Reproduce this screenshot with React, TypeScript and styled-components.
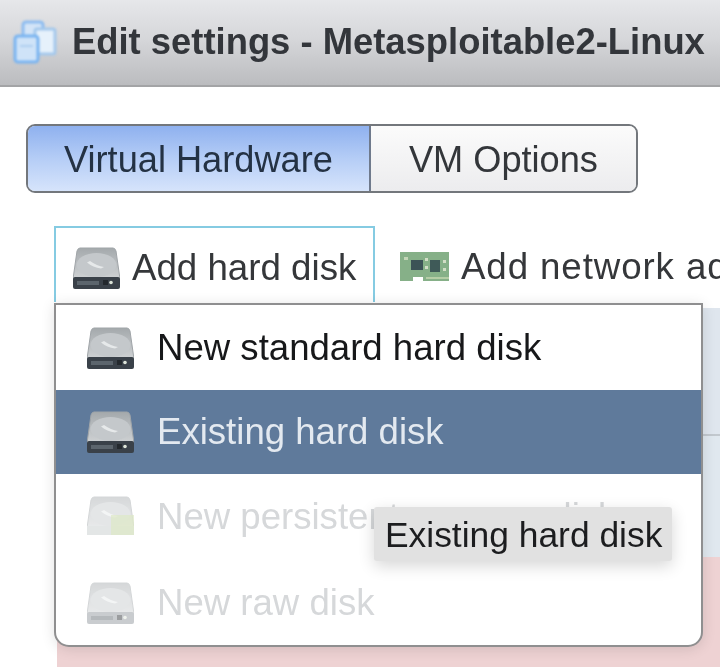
import { createGlobalStyle, styled } from "styled-components";

const GlobalStyle = createGlobalStyle`
  html, body {
    margin: 0;
    padding: 0;
    background: #fff;
  }
  body {
    font-family: "Liberation Sans", Arial, sans-serif;
  }
`;

const Page = styled.div`
  position: relative;
  width: 720px;
  height: 668px;
  overflow: hidden;
  background: #fff;
  filter: blur(0.6px);
`;

const TitleBar = styled.header`
  display: flex;
  align-items: center;
  gap: 15px;
  box-sizing: border-box;
  height: 87px;
  padding: 0 0 2px 13px;
  border-bottom: 2px solid #a3a4a6;
  background: linear-gradient(#e6e7ea, #d6d7da 45%, #bbbcbf);
  white-space: nowrap;
`;

const Title = styled.h1`
  margin: 0;
  font-size: 36.4px;
  font-weight: 700;
  color: #33363b;
`;

const TabGroup = styled.div`
  display: flex;
  width: 612px;
  height: 69px;
  box-sizing: border-box;
  margin: 37px 0 0 26px;
  border: 2px solid #73777c;
  border-radius: 9px;
  overflow: hidden;
`;

const Tab = styled.div<{ $active?: boolean }>`
  display: flex;
  align-items: center;
  justify-content: center;
  box-sizing: border-box;
  padding-top: 2px;
  width: ${(p) => (p.$active ? "344px" : "266px")};
  font-size: 36.2px;
  color: ${(p) => (p.$active ? "#243244" : "#33363a")};
  background: ${(p) =>
    p.$active
      ? "linear-gradient(#8fb1ef, #b5cdf6 50%, #d6e4fb)"
      : "linear-gradient(#fbfbfb, #ececee)"};
  border-right: ${(p) => (p.$active ? "2px solid #6f7a8c" : "none")};
`;

const Toolbar = styled.div`
  display: flex;
  height: 76px;
  margin-top: 33px;
  padding-left: 54px;
`;

const ToolButton = styled.div<{ $focused?: boolean }>`
  display: flex;
  flex: none;
  align-items: center;
  gap: 12px;
  box-sizing: border-box;
  font-size: 36.7px;
  letter-spacing: ${(p) => (p.$focused ? "0" : "0.9px")};
  color: #35373a;
  white-space: nowrap;
  padding: ${(p) => (p.$focused ? "5px 0 0 17px" : "5px 0 0 25px")};
  width: ${(p) => (p.$focused ? "321px" : "auto")};
  border: ${(p) => (p.$focused ? "2px solid #85cbe2" : "none")};
  border-bottom: none;
`;

const Grid = styled.div`
  margin-left: 57px;
  height: 365px;
  display: grid;
  grid-template-rows: 6px 126px 123px 1fr;
`;

const GridGap = styled.div`
  background: #fff;
`;

const GridRow = styled.div<{ $tone: "blue" | "pale" | "red" }>`
  border-top: ${(p) => (p.$tone === "pale" ? "2px solid #c2c8ce" : "none")};
  background: ${(p) =>
    p.$tone === "red"
      ? "#eed2d3"
      : p.$tone === "pale"
        ? "#e0e8ef"
        : "#dfe6ee"};
`;

const Menu = styled.div`
  position: absolute;
  left: 54px;
  top: 303px;
  width: 649px;
  height: 344px;
  box-sizing: border-box;
  border: 2px solid #8f8f90;
  border-radius: 0 0 15px 15px;
  background: #fff;
  box-shadow: 0 2px 14px rgba(0, 0, 0, 0.12);
  display: grid;
  grid-template-rows: 85px 84px 84px 1fr;
  overflow: hidden;
`;

const MenuItem = styled.div<{ $state?: "selected" | "disabled" }>`
  display: flex;
  align-items: center;
  gap: 23px;
  box-sizing: border-box;
  padding: ${(p) => (p.$state === "disabled" ? "2px 0 0 31px" : "0 0 0 31px")};
  font-size: 36.6px;
  white-space: nowrap;
  color: ${(p) =>
    p.$state === "selected"
      ? "#e3e9f0"
      : p.$state === "disabled"
        ? "#d6d8da"
        : "#17181a"};
  background: ${(p) => (p.$state === "selected" ? "#5f7a9b" : "transparent")};
`;

const Tooltip = styled.div`
  position: absolute;
  left: 374px;
  top: 507px;
  width: 298px;
  height: 54px;
  box-sizing: border-box;
  padding: 3px 0 0 11px;
  display: flex;
  align-items: center;
  border-radius: 3px;
  background: #e1e1e1;
  color: #1c1d1f;
  font-size: 35.4px;
  white-space: nowrap;
  box-shadow: 0 5px 16px rgba(0, 0, 0, 0.16);
`;

const IconSvg = styled.svg<{ $faded?: boolean }>`
  flex: none;
  display: block;
  opacity: ${(p) => (p.$faded ? 0.45 : 1)};
`;

const SoftIconSvg = styled(IconSvg)`
  filter: blur(1px);
`;

const VmIcon = () => (
  <SoftIconSvg width="44" height="44" viewBox="0 0 44 44">
    <rect x="10" y="2" width="20" height="24" rx="3" fill="#d3e4f7" stroke="#8dbcf0" strokeWidth="3" />
    <rect x="22" y="9" width="20" height="25" rx="2" fill="#e6f1fb" stroke="#a4c8ec" strokeWidth="3" />
    <rect x="2" y="16" width="23" height="26" rx="3" fill="#cfe3f8" stroke="#7ab4f0" strokeWidth="3" />
    <rect x="7" y="25" width="13" height="2" fill="#afcff0" />
  </SoftIconSvg>
);

const DiskIcon = ({ faded, memory }: { faded?: boolean; memory?: boolean }) => (
  <IconSvg width="47" height="42" viewBox="0 0 47 42" $faded={faded}>
    <defs>
      <linearGradient id="diskTop" x1="0" y1="0" x2="0" y2="1">
        <stop offset="0" stopColor="#a4a9ac" />
        <stop offset="1" stopColor="#cfd2d4" />
      </linearGradient>
    </defs>
    <path d="M7 1h33q2 0 3 3l4 28H0L4 4q1-3 3-3z" fill="url(#diskTop)" stroke="#a0a5a8" />
    <ellipse cx="23.5" cy="18" rx="20" ry="12" fill="#c4c8cb" />
    <path d="M17 14q7 5 14 6l-3 1.5q-8-1-14-6z" fill="#e6e9ea" />
    {memory ? (
      <>
        <rect y="30" width="47" height="9" fill="#c3c8ca" />
        <rect x="24" y="19" width="23" height="20" fill="#b6cf82" opacity="0.7" />
      </>
    ) : (
      <>
        <rect y="30" width="47" height="12" rx="2" fill={faded ? "#8a9096" : "#3a4149"} />
        <rect x="4" y="34" width="22" height="4" fill="#5c656d" />
        <rect x="30" y="33" width="5" height="5" fill="#23282d" />
        <circle cx="38" cy="35.5" r="1.8" fill="#dce3d8" />
      </>
    )}
  </IconSvg>
);

const NicIcon = () => (
  <IconSvg width="49" height="30" viewBox="0 0 49 30">
    <path d="M0 0h49v29H23v-4H13v4H0z" fill="#86b088" />
    <rect x="11" y="8" width="12" height="10" fill="#3c5356" />
    <rect x="30" y="8" width="10" height="12" fill="#3f5a58" />
    <rect x="4" y="5" width="4" height="3" fill="#c4d6b8" />
    <rect x="25" y="6" width="3" height="3" fill="#d2dec6" />
    <rect x="25" y="14" width="3" height="3" fill="#d2dec6" />
    <rect x="43" y="8" width="3" height="3" fill="#d2dec6" />
    <rect x="43" y="16" width="3" height="3" fill="#d2dec6" />
    <rect x="26" y="25" width="23" height="2" fill="#b5cda6" />
  </IconSvg>
);

export default function App() {
  return (
    <>
      <GlobalStyle />
      <Page>
        <TitleBar>
          <VmIcon />
          <Title>Edit settings - Metasploitable2-Linux</Title>
        </TitleBar>
        <TabGroup>
          <Tab $active>Virtual Hardware</Tab>
          <Tab>VM Options</Tab>
        </TabGroup>
        <Toolbar>
          <ToolButton $focused>
            <DiskIcon />
            Add hard disk
          </ToolButton>
          <ToolButton>
            <NicIcon />
            Add network adapter
          </ToolButton>
        </Toolbar>
        <Grid>
          <GridGap />
          <GridRow $tone="blue" />
          <GridRow $tone="pale" />
          <GridRow $tone="red" />
        </Grid>
        <Menu>
          <MenuItem>
            <DiskIcon />
            New standard hard disk
          </MenuItem>
          <MenuItem $state="selected">
            <DiskIcon />
            Existing hard disk
          </MenuItem>
          <MenuItem $state="disabled">
            <DiskIcon faded memory />
            New persistent memory disk
          </MenuItem>
          <MenuItem $state="disabled">
            <DiskIcon faded />
            New raw disk
          </MenuItem>
        </Menu>
        <Tooltip>Existing hard disk</Tooltip>
      </Page>
    </>
  );
}
